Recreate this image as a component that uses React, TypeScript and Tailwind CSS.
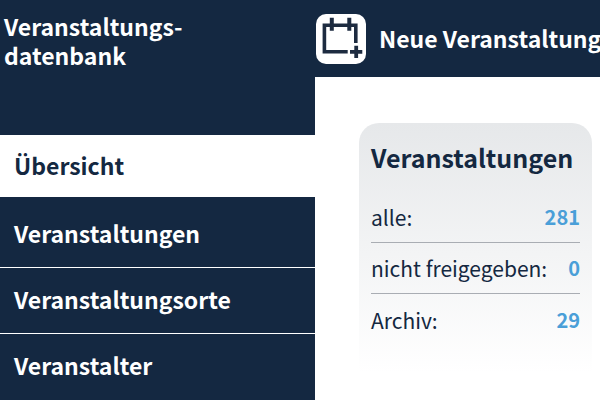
import React from 'react';

const navItems = [
  { label: 'Übersicht', href: '#uebersicht' },
  { label: 'Veranstaltungen', href: '#veranstaltungen' },
  { label: 'Veranstaltungsorte', href: '#orte' },
  { label: 'Veranstalter', href: '#veranstalter' },
];

const stats = [
  { label: 'alle:', value: 281 },
  { label: 'nicht freigegeben:', value: 0 },
  { label: 'Archiv:', value: 29 },
];

function CalendarPlusIcon() {
  return (
    <svg viewBox="0 0 50 50" className="w-[50px] h-[50px] shrink-0" aria-hidden="true">
      <rect width="50" height="50" rx="10" fill="#fff" />
      <path d="M31.7 37.800H8.400V11.300H39.800V29" fill="none" stroke="#1d2b40" strokeWidth="3.600" />
      <path d="M15.800 3.700V16.700M33.300 3.700V16.700" stroke="#1d2b40" strokeWidth="4" />
      <path d="M34 37.800H46.300M40.200 31.700V44" stroke="#1d2b40" strokeWidth="3.800" />
    </svg>
  );
}

export default function App() {
  return (
    <div className="flex min-h-screen overflow-hidden bg-white text-[#142841] font-['Noto_Sans_CJK_SC','Noto_Sans',sans-serif]">
      <aside className="w-[315px] shrink-0 bg-[#142841] text-white">
        <h1 className="h-[135px] pt-3 pl-1 text-[23px] leading-[29px] font-bold">
          Veranstaltungs-
          <br />
          datenbank
        </h1>
        <nav>
          {navItems.map((item, i) => (
            <a
              key={item.label}
              href={item.href}
              className={
                i === 0
                  ? 'flex items-center h-[62px] mb-[5px] pl-3.5 pb-0.5 text-[23px] leading-7 font-bold bg-white text-[#142841]'
                  : 'flex items-center h-[66px] pl-3.5 pb-1 text-[23px] leading-7 font-bold border-b border-white last:border-b-0'
              }
            >
              {item.label}
            </a>
          ))}
        </nav>
      </aside>

      <div className="flex-1 min-w-0">
        <header className="h-[77px] pl-px bg-[#142841] text-white overflow-hidden">
          <button type="button" className="flex items-center gap-[13px] h-full text-[23px] leading-7 font-bold whitespace-nowrap">
            <CalendarPlusIcon />
            <span className="pb-0.5">Neue Veranstaltung</span>
          </button>
        </header>

        <main className="pt-[46px] pl-11 pr-2">
          <section className="px-3 pt-[18px] pb-7 rounded-t-[20px] bg-gradient-to-b from-[#e6e8ea] to-white">
            <h2 className="mb-[19px] text-[25px] leading-8 font-bold">Veranstaltungen</h2>
            <dl>
              {stats.map((stat) => (
                <div
                  key={stat.label}
                  className="flex items-center justify-between h-[51px] border-b border-[#a9adb3] last:border-b-0 text-[21px] leading-7 whitespace-nowrap"
                >
                  <dt>{stat.label}</dt>
                  <dd className="text-[20px] font-bold text-[#4a9fd8]">{stat.value}</dd>
                </div>
              ))}
            </dl>
          </section>
        </main>
      </div>
    </div>
  );
}
